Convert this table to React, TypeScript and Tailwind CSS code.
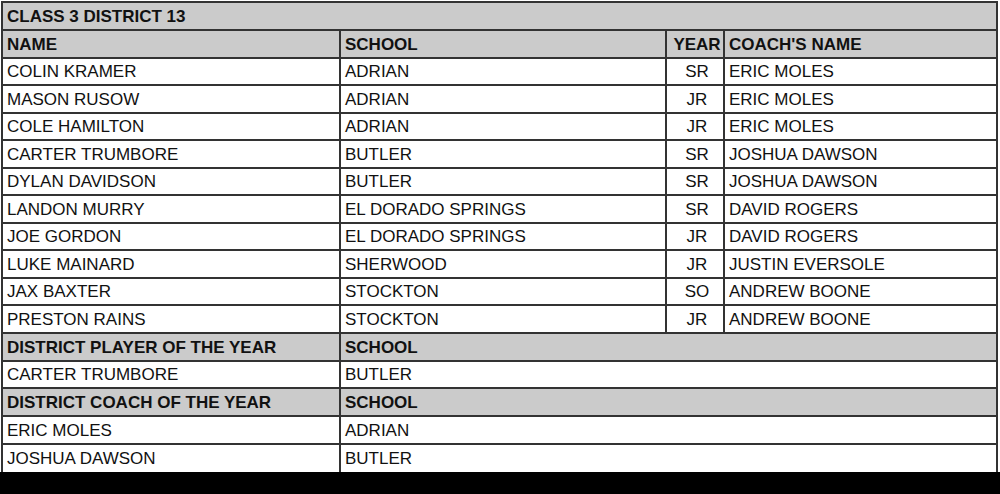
import React from 'react';

type Player = { name: string; school: string; year: string; coach: string };

const players: Player[] = [
  { name: 'COLIN KRAMER', school: 'ADRIAN', year: 'SR', coach: 'ERIC MOLES' },
  { name: 'MASON RUSOW', school: 'ADRIAN', year: 'JR', coach: 'ERIC MOLES' },
  { name: 'COLE HAMILTON', school: 'ADRIAN', year: 'JR', coach: 'ERIC MOLES' },
  { name: 'CARTER TRUMBORE', school: 'BUTLER', year: 'SR', coach: 'JOSHUA DAWSON' },
  { name: 'DYLAN DAVIDSON', school: 'BUTLER', year: 'SR', coach: 'JOSHUA DAWSON' },
  { name: 'LANDON MURRY', school: 'EL DORADO SPRINGS', year: 'SR', coach: 'DAVID ROGERS' },
  { name: 'JOE GORDON', school: 'EL DORADO SPRINGS', year: 'JR', coach: 'DAVID ROGERS' },
  { name: 'LUKE MAINARD', school: 'SHERWOOD', year: 'JR', coach: 'JUSTIN EVERSOLE' },
  { name: 'JAX BAXTER', school: 'STOCKTON', year: 'SO', coach: 'ANDREW BOONE' },
  { name: 'PRESTON RAINS', school: 'STOCKTON', year: 'JR', coach: 'ANDREW BOONE' },
];

// row heights (incl. bottom rule) so the lines land on whole pixels
const H = ['h-[28px]', 'h-[27px]'];
const heights = [0, 0, 1, 0, 1, 0, 1, 0, 1, 0, 1, 0, 0, 1, 0, 0, 1];

const rowBase = 'flex border-b-2 border-[#333]';
const cell = 'flex items-center pl-[4px] whitespace-nowrap';

export default function App() {
  let r = 0;
  const h = () => H[heights[r++]];

  return (
    <div className="w-[1000px] h-[494px] bg-white flex flex-col text-[17px] text-[#111] font-['Liberation_Sans',Arial,sans-serif] leading-none">
      <div className="ml-[1px] mt-[1px] w-[997px] border-l-2 border-r-2 border-t-2 border-[#333]">
        {/* title */}
        <div className={`${rowBase} ${h()} bg-[#cbcbcb]`}>
          <div className={`${cell} font-bold`}>CLASS 3 DISTRICT 13</div>
        </div>

        {/* column heads */}
        <div className={`${rowBase} ${h()} bg-[#cbcbcb] font-bold`}>
          <div className={`${cell} w-[338px] border-r-2 border-[#333]`}>NAME</div>
          <div className={`${cell} w-[326px] border-r-2 border-[#333]`}>SCHOOL</div>
          <div className={`${cell} w-[58px] border-r-2 border-[#333] justify-center pl-0`}>YEAR</div>
          <div className={`${cell} flex-1`}>COACH'S NAME</div>
        </div>

        {players.map((p) => (
          <div key={p.name} className={`${rowBase} ${h()}`}>
            <div className={`${cell} w-[338px] border-r-2 border-[#333]`}>{p.name}</div>
            <div className={`${cell} w-[326px] border-r-2 border-[#333]`}>{p.school}</div>
            <div className={`${cell} w-[58px] border-r-2 border-[#333] justify-center pl-0`}>{p.year}</div>
            <div className={`${cell} flex-1`}>{p.coach}</div>
          </div>
        ))}

        <div className={`${rowBase} ${h()} bg-[#cbcbcb] font-bold`}>
          <div className={`${cell} w-[338px] border-r-2 border-[#333]`}>DISTRICT PLAYER OF THE YEAR</div>
          <div className={`${cell} flex-1`}>SCHOOL</div>
        </div>
        <div className={`${rowBase} ${h()}`}>
          <div className={`${cell} w-[338px] border-r-2 border-[#333]`}>CARTER TRUMBORE</div>
          <div className={`${cell} flex-1`}>BUTLER</div>
        </div>

        <div className={`${rowBase} ${h()} bg-[#cbcbcb] font-bold`}>
          <div className={`${cell} w-[338px] border-r-2 border-[#333]`}>DISTRICT COACH OF THE YEAR</div>
          <div className={`${cell} flex-1`}>SCHOOL</div>
        </div>
        <div className={`${rowBase} ${h()}`}>
          <div className={`${cell} w-[338px] border-r-2 border-[#333]`}>ERIC MOLES</div>
          <div className={`${cell} flex-1`}>ADRIAN</div>
        </div>
        <div className={`flex ${h()}`}>
          <div className={`${cell} w-[338px] border-r-2 border-[#333]`}>JOSHUA DAWSON</div>
          <div className={`${cell} flex-1`}>BUTLER</div>
        </div>
      </div>
      <div className="flex-1 bg-black" />
    </div>
  );
}
